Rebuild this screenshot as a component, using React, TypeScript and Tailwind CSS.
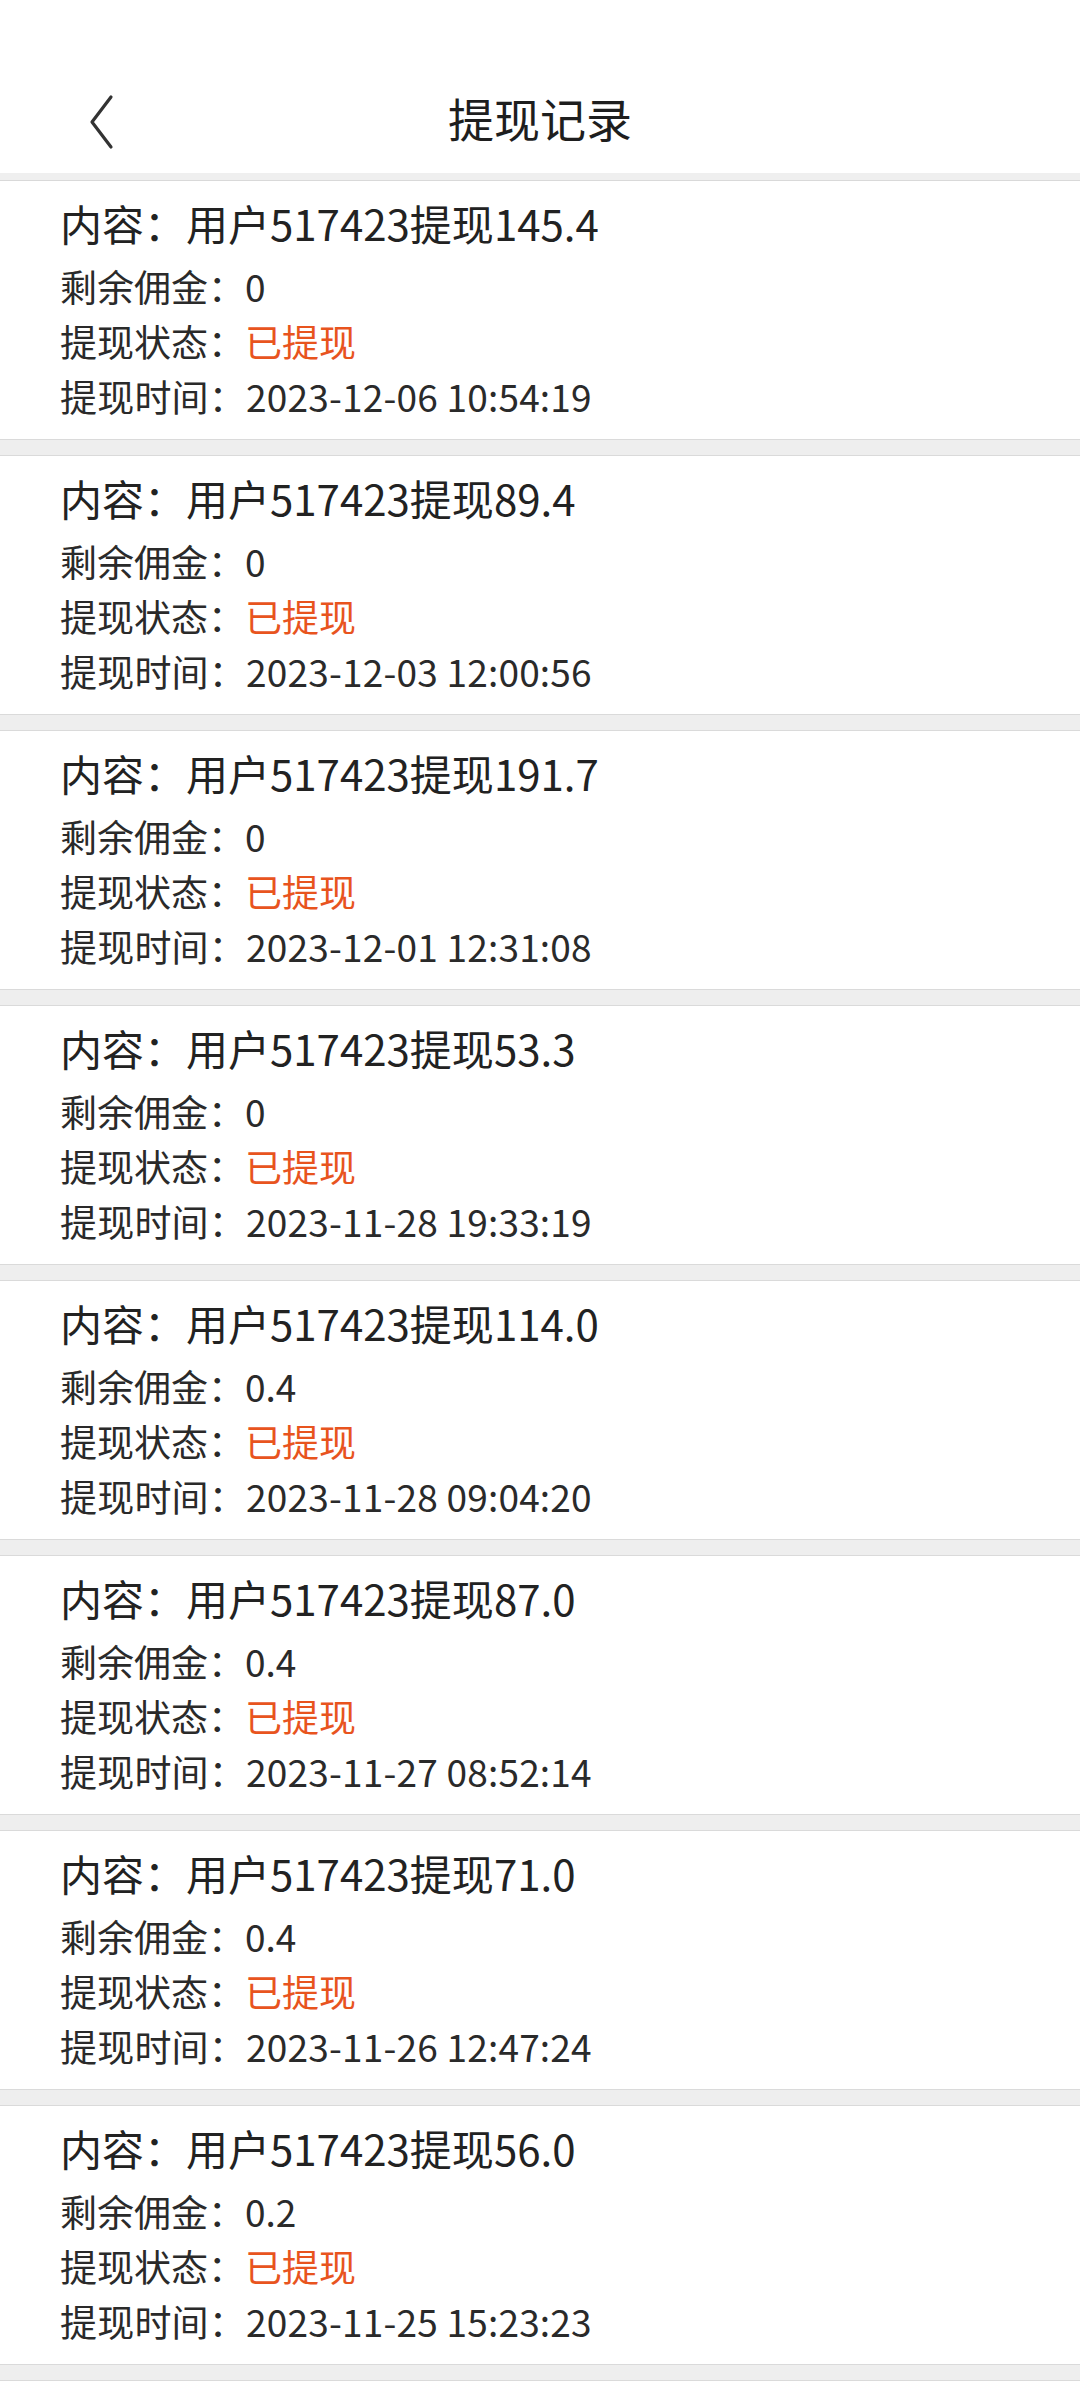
import React from 'react';

type Record = {
  amount: string;
  left: string;
  time: string;
};

const records: Record[] = [
  { amount: '145.4', left: '0', time: '2023-12-06 10:54:19' },
  { amount: '89.4', left: '0', time: '2023-12-03 12:00:56' },
  { amount: '191.7', left: '0', time: '2023-12-01 12:31:08' },
  { amount: '53.3', left: '0', time: '2023-11-28 19:33:19' },
  { amount: '114.0', left: '0.4', time: '2023-11-28 09:04:20' },
  { amount: '87.0', left: '0.4', time: '2023-11-27 08:52:14' },
  { amount: '71.0', left: '0.4', time: '2023-11-26 12:47:24' },
  { amount: '56.0', left: '0.2', time: '2023-11-25 15:23:23' },
];

function RecordCard({ item }: { item: Record }) {
  return (
    <div className="h-[258px] bg-white pl-[60px] pt-[12px]">
      <p className="text-[42px]/[60px] text-[#222]">内容：用户517423提现{item.amount}</p>
      <div className="mt-[6px] text-[37px]/[55px] text-[#2a2a2a]">
        <p>剩余佣金：{item.left}</p>
        <p>
          提现状态：<span className="text-[#e8541e]">已提现</span>
        </p>
        <p className="tracking-[0.2px]">提现时间：{item.time}</p>
      </div>
    </div>
  );
}

export default function App() {
  return (
    <div className="min-h-[2400px] w-[1080px] bg-white font-['Noto_Sans_CJK_SC','Noto_Sans',sans-serif]">
      <div className="relative flex h-[173px] items-end justify-center pb-[28px]">
        <button className="absolute left-[80px] top-[92px] flex h-[60px] w-[40px] items-center justify-center">
          <svg width="30" height="56" viewBox="0 0 30 56" fill="none">
            <path d="M26 3 L7 28 L26 53" stroke="#333" strokeWidth="3.2" strokeLinecap="round" strokeLinejoin="round" />
          </svg>
        </button>
        <h1 className="text-[46px]/[56px] text-[#1e1e1e]">提现记录</h1>
      </div>
      <div className="h-[8px] border-b border-[#d9d9d9] bg-[#efefef]" />
      {records.map((item, i) => (
        <div key={i}>
          <RecordCard item={item} />
          <div className="h-[17px] border-y border-[#dadada] bg-[#eeeeee]" />
        </div>
      ))}
    </div>
  );
}
